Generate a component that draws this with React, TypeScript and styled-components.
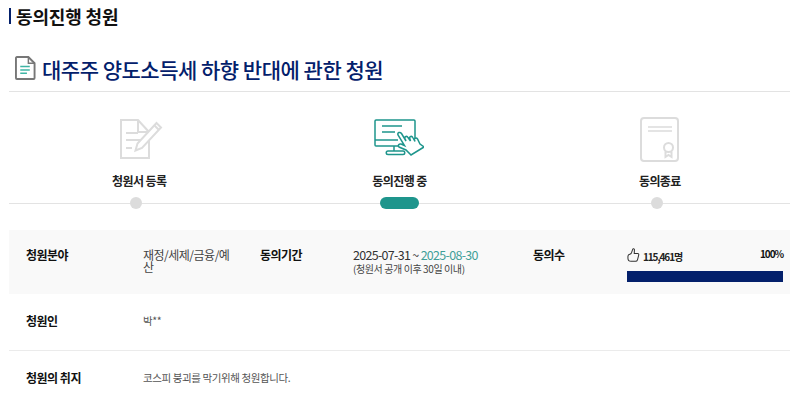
import React from 'react';
import styled, { createGlobalStyle } from 'styled-components';

const GlobalStyle = createGlobalStyle`
  html, body {
    margin: 0;
    padding: 0;
    background: #fff;
    overflow: hidden;
  }
  body {
    font-family: "Noto Sans CJK KR", "Noto Sans", sans-serif;
    color: #111;
  }
`;

const Page = styled.div`
  width: 800px;
  height: 401px;
  box-sizing: border-box;
  padding: 0 10px 0 9px;
  overflow: hidden;
`;

const PageHeading = styled.h2`
  margin: 8px 0 0;
  height: 16px;
  display: flex;
  align-items: center;
  padding-left: 5px;
  border-left: 2px solid #03206b;
  font-size: 18px;
  line-height: 16px;
  font-weight: 700;
  letter-spacing: -0.15px;
  color: #111;
`;

const TitleRow = styled.div`
  display: flex;
  align-items: center;
  gap: 6px;
  height: 68px;
  box-sizing: border-box;
  padding: 22px 0 0 6px;
  border-bottom: 1px solid #e3e3e3;
`;

const Title = styled.h1`
  margin: 0;
  font-size: 21px;
  line-height: 30px;
  font-weight: 500;
  letter-spacing: -0.5px;
  color: #03206b;
`;

const TitleIcon = styled.svg`
  display: block;
  flex: none;
  width: 21px;
  height: 26px;
  margin-top: -2px;
`;

const Steps = styled.ol`
  list-style: none;
  margin: 0;
  padding: 0;
  height: 111px;
  display: grid;
  grid-template-columns: repeat(3, 1fr);
  border-bottom: 1px solid #e3e3e3;
`;

const Step = styled.li`
  display: flex;
  flex-direction: column;
  align-items: center;
  padding-top: 24px;
`;

const StepIcon = styled.svg`
  width: 50px;
  height: 46px;
  display: block;
`;

const StepLabel = styled.div`
  margin-top: 10px;
  font-size: 12px;
  line-height: 18px;
  font-weight: 700;
  letter-spacing: -0.6px;
  color: #222;
`;

const StepDot = styled.span<{ $active?: boolean }>`
  margin-top: 7px;
  margin-right: ${props => (props.$active ? '0' : '6px')};
  display: block;
  width: ${props => (props.$active ? '39px' : '12px')};
  height: 12px;
  border-radius: 6px;
  background: ${props => (props.$active ? '#1e958c' : '#dcdcdc')};
`;

const SummaryRow = styled.div`
  margin-top: 26px;
  height: 64px;
  background: #f9f9f9;
  display: grid;
  grid-template-columns: 117px 117px 93px 180px 94px 156px;
  padding-left: 17px;
  padding-top: 16px;
  box-sizing: border-box;
`;

const Label = styled.div`
  font-size: 12px;
  line-height: 18px;
  font-weight: 700;
  letter-spacing: -0.5px;
  color: #111;
`;

const FieldValue = styled.div`
  font-size: 12px;
  line-height: 12px;
  padding-top: 3px;
  width: 90px;
  letter-spacing: -0.5px;
  color: #444;
  word-break: break-all;
`;

const Period = styled.div`
  font-size: 12.5px;
  line-height: 16px;
  padding-top: 1px;
  letter-spacing: -0.7px;
  color: #333;
  white-space: nowrap;
`;

const PeriodEnd = styled.span`
  color: #3f9f98;
`;

const PeriodNote = styled.div`
  font-size: 10px;
  line-height: 12px;
  letter-spacing: -0.4px;
  color: #444;
  white-space: nowrap;
`;

const CountHead = styled.div`
  display: flex;
  align-items: center;
  height: 20px;
  margin-top: -1px;
`;

const Count = styled.span`
  margin-left: 3px;
  font-size: 10px;
  line-height: 14px;
  font-weight: 700;
  letter-spacing: -1.1px;
  padding-top: 3px;
  color: #222;
`;

const Percent = styled.span`
  margin-left: auto;
  font-size: 10px;
  line-height: 14px;
  font-weight: 700;
  letter-spacing: -1.1px;
  padding-bottom: 3px;
  color: #111;
`;

const Bar = styled.div`
  margin-top: 6px;
  height: 11px;
  background: #03206b;
`;

const InfoRow = styled.div<{ $border?: boolean }>`
  height: 54px;
  display: flex;
  align-items: center;
  padding: 0 0 2px 17px;
  border-bottom: ${props => (props.$border ? '1px solid #ebebeb' : 'none')};
`;

const InfoLabel = styled(Label)`
  width: 117px;
  flex: none;
`;

const InfoValue = styled.div`
  font-size: 10.5px;
  line-height: 16px;
  letter-spacing: -0.4px;
  color: #555;
`;

const DocIcon = () => (
  <TitleIcon viewBox="0 0 22 26" fill="none">
    <path d="M2 1.500h12l6.500 6.500v15.500a1 1 0 0 1-1 1H2a1 1 0 0 1-1-1V2.500a1 1 0 0 1 1-1z" fill="#fff" stroke="#777" strokeWidth="2" />
    <path d="M14 1.500V8h6.500" stroke="#777" strokeWidth="1.500" />
    <path d="M5.500 11.500h10M5.500 15h10M5.500 18.500h7" stroke="#3fb5a5" strokeWidth="1.500" />
  </TitleIcon>
);

const ThumbIcon = () => (
  <svg width="13" height="16" viewBox="0 0 14 16" fill="none" stroke="#333" strokeWidth="1.100">
    <path d="M1 9.500c0-1.200.8-2 2-2.300.9-.2 1.500-.8 1.900-1.700L6.200 1.700c.3-.8 1.700-.6 1.800.5L7.800 6.500h3.700c1 0 1.400.9 1.100 1.700l-1.300 5c-.3.900-.9 1.600-2 1.600H4.500C2.300 14.800 1 13.500 1 11.500z" />
  </svg>
);

const App: React.FC = () => (
  <Page>
    <GlobalStyle />
    <PageHeading>동의진행 청원</PageHeading>
    <TitleRow>
      <DocIcon />
      <Title>대주주 양도소득세 하향 반대에 관한 청원</Title>
    </TitleRow>
    <Steps>
      <Step>
        <StepIcon viewBox="0 0 50 46" fill="none" stroke="#dcdcdc" strokeWidth="2">
          <path d="M7 4h17l11 12v26H7z" />
          <path d="M24 4v12h11" />
          <path d="M12 17h12M12 24h17M12 32h6" />
          <path d="M21.500 34.500l2-7 19-20.500 4.500 4.500-19 20.500z" fill="#fff" />
          <path d="M40.500 9.500l4.500 4.500" />
        </StepIcon>
        <StepLabel>청원서 등록</StepLabel>
        <StepDot />
      </Step>
      <Step>
        <StepIcon viewBox="0 0 50 46" fill="none" stroke="#1e958c" strokeWidth="1.500">
          <path d="M27 30H2a1 1 0 0 1-1-1V5a1 1 0 0 1 1-1h38a1 1 0 0 1 1 1v18" />
          <path d="M1 24h23" />
          <path d="M8 10h20M8 16h13" />
          <path d="M20 30v5M14 35h15a1.500 1.500 0 0 1 0 3.500H14a1.500 1.500 0 0 1 0-3.500z" />
          <path d="M37 39l-5-5-7-3c-1.500-1.500 0-3.500 2-3l3.500 1.500L24 19c-1-2.500 2-3.500 3.500-1.500L32 25l-1-2.500c-.7-2 2-3 3-1l2.500 3.500-.7-2.500c-.7-2 2-3 3-1l2.200 4-.5-1.500c-.6-2 2-2.500 3-1L46 28l4 3z" fill="#fff" />
        </StepIcon>
        <StepLabel>동의진행 중</StepLabel>
        <StepDot $active />
      </Step>
      <Step>
        <StepIcon viewBox="0 0 50 46" fill="none" stroke="#dcdcdc" strokeWidth="2">
          <rect x="6" y="2" width="37" height="43" rx="3" />
          <path d="M13 11h24M13 15h24" strokeWidth="1.500" />
          <circle cx="33.500" cy="31.500" r="4.500" />
          <path d="M30.500 35.500v5.500l3-2 3 2v-5.500" />
        </StepIcon>
        <StepLabel>동의종료</StepLabel>
        <StepDot />
      </Step>
    </Steps>
    <SummaryRow>
      <Label>청원분야</Label>
      <FieldValue>재정/세제/금융/예산</FieldValue>
      <Label>동의기간</Label>
      <div>
        <Period>
          2025-07-31 ~ <PeriodEnd>2025-08-30</PeriodEnd>
        </Period>
        <PeriodNote>(청원서 공개 이후 30일 이내)</PeriodNote>
      </div>
      <Label>동의수</Label>
      <div>
        <CountHead>
          <ThumbIcon />
          <Count>115,461명</Count>
          <Percent>100%</Percent>
        </CountHead>
        <Bar />
      </div>
    </SummaryRow>
    <InfoRow $border>
      <InfoLabel>청원인</InfoLabel>
      <InfoValue>박**</InfoValue>
    </InfoRow>
    <InfoRow>
      <InfoLabel>청원의 취지</InfoLabel>
      <InfoValue>코스피 붕괴를 막기위해 청원합니다.</InfoValue>
    </InfoRow>
  </Page>
);

export default App;
